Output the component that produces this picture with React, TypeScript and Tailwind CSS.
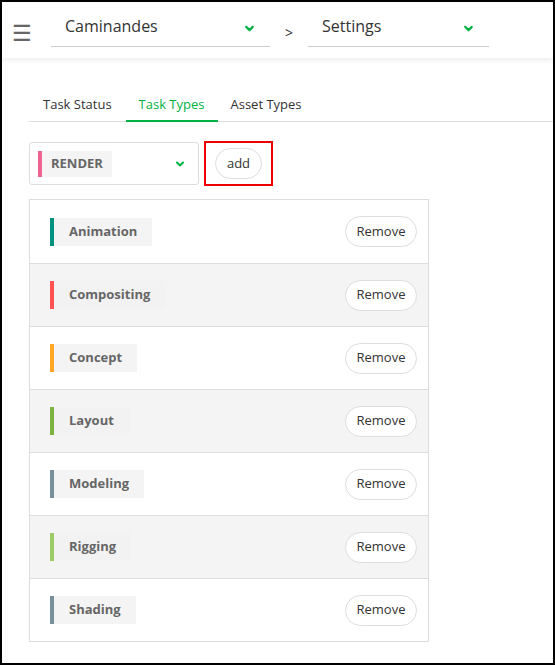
import { ChevronDown } from "lucide-react";

const taskTypes = [
  { name: "Animation", color: "#00927f" },
  { name: "Compositing", color: "#ff5252" },
  { name: "Concept", color: "#ffa726" },
  { name: "Layout", color: "#7cb342" },
  { name: "Modeling", color: "#78909c" },
  { name: "Rigging", color: "#9ccc65" },
  { name: "Shading", color: "#78909c" },
];

function Combo({ label, width }: { label: string; width: string }) {
  return (
    <div className={`${width} h-[45px] flex items-end border-b border-[#cccccc]`}>
      <div className="flex items-center justify-between w-full h-[34px] pb-[6px] pl-[14px] pr-[14px]">
        <span className="text-[16px] text-[#333333] leading-none">{label}</span>
        <ChevronDown size={13} strokeWidth={4} className="text-[#00b242] mt-[4px]" />
      </div>
    </div>
  );
}

export default function App() {
  return (
    <div
      className="w-[555px] h-[665px] border-2 border-black bg-white overflow-hidden flex flex-col"
      style={{ fontFamily: '"Open Sans", "Noto Sans", sans-serif' }}
    >
      {/* Top bar */}
      <div className="h-[56px] flex items-start shadow-[0_2px_6px_rgba(0,0,0,0.08)] shrink-0">
        <div className="w-[49px] h-[44px] flex items-end pb-[3px] pl-[10px]">
          <span className="text-[22px] leading-none text-[#666666]">☰</span>
        </div>
        <Combo label="Caminandes" width="w-[219px]" />
        <div className="w-[38px] h-[45px] flex items-end justify-center pb-[7px]">
          <span className="text-[14px] leading-none text-[#333333]">&gt;</span>
        </div>
        <Combo label="Settings" width="w-[181px]" />
      </div>

      <div className="pl-[27px] flex flex-col">
        {/* Tabs */}
        <div className="mt-[34px] flex border-b border-[#dddddd] h-[30px] text-[13px]">
          <div className="px-[14px] text-[#333333] leading-[24px]">Task Status</div>
          <div className="px-[13px] text-[#00b242] leading-[24px] border-b-2 border-[#00b242] h-[30px]">
            Task Types
          </div>
          <div className="px-[13px] text-[#333333] leading-[24px]">Asset Types</div>
        </div>

        {/* Add row */}
        <div className="mt-[19px] flex items-center gap-[5px]">
          <div className="w-[170px] h-[43px] border border-[#dddddd] rounded-[3px] flex items-center pl-[8px] pr-[12px] justify-between">
            <div className="flex h-[26px]">
              <div className="w-[4px] bg-[#f06292]" />
              <div className="bg-[#f4f4f4] px-[9px] flex items-center text-[13px] font-bold text-[#666666]">
                RENDER
              </div>
            </div>
            <ChevronDown size={12} strokeWidth={4} className="text-[#00b242]" />
          </div>
          <div className="w-[69px] h-[45px] border-2 border-[#ee0000] flex items-center justify-center">
            <button className="w-[47px] h-[31px] rounded-full border border-[#dddddd] text-[13px] text-[#333333]">
              add
            </button>
          </div>
        </div>

        {/* Task type list */}
        <div className="mt-[13px] w-[400px] border border-[#dddddd]">
          {taskTypes.map((t, i) => (
            <div
              key={t.name}
              className={`h-[63px] flex items-center justify-between pl-[20px] pr-[11px] ${
                i > 0 ? "border-t border-[#dddddd]" : ""
              } ${i % 2 === 1 ? "bg-[#f4f4f4]" : "bg-white"}`}
            >
              <div className="flex h-[28px]">
                <div className="w-[4px]" style={{ backgroundColor: t.color }} />
                <div
                  className={`px-[15px] flex items-center text-[13px] font-bold text-[#666666] ${
                    i % 2 === 1 ? "bg-[#f2f2f2]" : "bg-[#f4f4f4]"
                  }`}
                >
                  {t.name}
                </div>
              </div>
              <button className="w-[72px] h-[31px] rounded-full border border-[#dddddd] bg-white text-[13px] text-[#333333]">
                Remove
              </button>
            </div>
          ))}
        </div>
      </div>
    </div>
  );
}
